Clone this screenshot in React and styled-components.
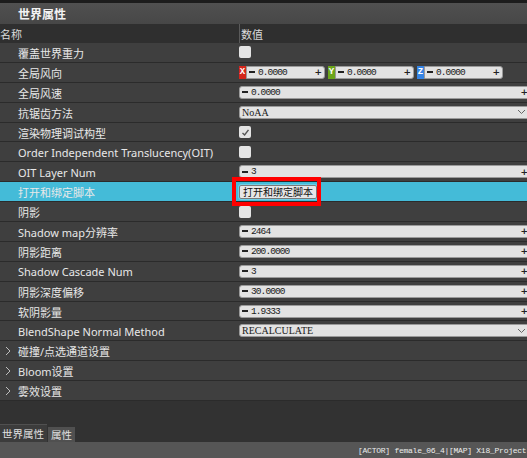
import React from 'react';
import styled, { createGlobalStyle } from 'styled-components';

const GlobalStyle = createGlobalStyle`
  html, body {
    margin: 0;
    padding: 0;
    background: #323232;
    overflow: hidden;
  }
`;

const CJK = `"Noto Sans", "Noto Sans CJK SC", sans-serif`;
const MONO = `"Liberation Mono", "Noto Sans CJK SC", monospace`;

const Panel = styled.div`
  width: 527px;
  height: 458px;
  display: flex;
  flex-direction: column;
  background: #323232;
  font-family: ${CJK};
  color: #e6e6e6;
  overflow: hidden;
`;

const TopStrip = styled.div`
  height: 3px;
  background: #1c1c1c;
`;

const TitleBar = styled.div`
  height: 21px;
  display: flex;
  align-items: center;
  padding-left: 18px;
  background: linear-gradient(#505050, #474747);
  font-size: 12px;
  font-weight: bold;
  color: #f2f2f2;
`;

const Grid = styled.div`
  display: grid;
  grid-template-columns: 239px 1fr;
`;

const HeaderRow = styled(Grid)`
  height: 19px;
  background: #2f2f2f;
  font-size: 11px;
  align-items: center;
  color: #dcdcdc;
`;

const HeaderCell = styled.div`
  height: 100%;
  display: flex;
  align-items: center;
  ${(p) => p.$divider && 'border-left: 1px solid #5a5a5a; padding-left: 1px;'}
`;

const Row = styled(Grid)`
  height: 18.9px;
  border-bottom: 1px solid #2b2b2b;
  background: ${(p) => (p.$active ? '#44bbd8' : '#3f3f3f')};
  align-items: center;
  font-size: 11px;
`;

const Label = styled.div`
  padding-left: 18px;
  padding-top: 1px;
  white-space: nowrap;
  color: #e8e8e8;
`;

const ValueCell = styled.div`
  position: relative;
  height: 100%;
  display: flex;
  align-items: center;
  gap: 2px;
  min-width: 0;
`;

const Check = styled.div`
  width: 12px;
  height: 12px;
  border-radius: 2px;
  background: #e4e4e4;
  display: flex;
  align-items: center;
  justify-content: center;
`;

const Spin = styled.div`
  flex: ${(p) => (p.$w ? `0 0 ${p.$w}px` : '1')};
  height: 11px;
  background: #e2e2e2;
  border: 1px solid #9a9a9a;
  border-radius: ${(p) => (p.$flat ? '0 3px 3px 0' : '3px')};
  display: flex;
  align-items: center;
  font-family: ${MONO};
  font-size: 9.5px;
  letter-spacing: -0.9px;
  color: #1a1a1a;
  padding: 0 2px;
  box-sizing: content-box;
  margin-right: ${(p) => (p.$w ? '0' : '-4px')};
`;

const Minus = styled.span`
  width: 6px;
  height: 2px;
  background: #222;
  margin-right: 3px;
`;

const SpinText = styled.span`
  flex: 1;
  white-space: nowrap;
`;

const Plus = styled.span`
  font-family: "DejaVu Sans", sans-serif;
  font-weight: bold;
  font-size: 9px;
  letter-spacing: 0;
  color: #222;
`;

const Axis = styled.div`
  width: 7px;
  height: 13px;
  background: ${(p) => p.$c};
  color: #fff;
  font-family: ${MONO};
  font-size: 9px;
  font-weight: bold;
  display: flex;
  align-items: center;
  justify-content: center;
`;

const Vec = styled.div`
  display: flex;
  align-items: center;
  margin-right: 1px;
`;

const Combo = styled.div`
  flex: 1;
  height: 11px;
  margin-right: -4px;
  background: #e2e2e2;
  border: 1px solid #9a9a9a;
  border-radius: 3px;
  display: flex;
  align-items: center;
  padding: 0 10px 0 2px;
  font-family: "Liberation Serif", serif;
  font-size: 10px;
  color: #1a1a1a;
`;

const Button = styled.div`
  height: 12px;
  padding: 0 3px;
  background: #e6e6e6;
  border: 1px solid #7a7a7a;
  outline: 1px solid #6fd0e8;
  border-radius: 2px;
  font-size: 10px;
  color: #111;
  display: flex;
  align-items: center;
  font-family: "Noto Sans CJK SC", sans-serif;
`;

const Marker = styled.div`
  position: absolute;
  left: -7px;
  top: -5px;
  width: 81px;
  height: 21px;
  border: 4px solid #ff0000;
  pointer-events: none;
`;

const GroupRow = styled.div`
  height: 18.9px;
  border-bottom: 1px solid #2b2b2b;
  background: #3f3f3f;
  display: flex;
  align-items: center;
  font-size: 11px;
  color: #e6e6e6;
`;

const Chevron = styled.span`
  width: 18px;
  display: flex;
  justify-content: center;
  padding-right: 2px;
  box-sizing: border-box;
`;

const Filler = styled.div`
  flex: 1;
  background: #323232;
`;

const TabBar = styled.div`
  height: 18px;
  display: flex;
  align-items: flex-end;
  background: #323232;
`;

const Tab = styled.div`
  height: ${(p) => (p.$on ? 18 : 15)}px;
  padding: 0 3px 0 ${(p) => (p.$on ? 2 : 3)}px;
  background: ${(p) => (p.$on ? '#3c3c3c' : '#505050')};
  border-top: ${(p) => (p.$on ? '1px solid #505050' : 'none')};
  box-sizing: border-box;
  font-size: 10.5px;
  color: #e0e0e0;
  display: flex;
  align-items: center;
  margin-right: 1px;
  font-family: "Noto Sans CJK SC", sans-serif;
`;

const StatusBar = styled.div`
  height: 16px;
  background: #565656;
  display: flex;
  align-items: center;
  padding-left: 358px;
  font-family: ${MONO};
  font-size: 8px;
  letter-spacing: -0.25px;
  color: #ececec;
  white-space: nowrap;
  overflow: hidden;
`;

const Tick = () => (
  <svg width="9" height="9" viewBox="0 0 9 9">
    <path d="M1.5 5 L3.6 7 L7.5 1.8" fill="none" stroke="#555" strokeWidth="1.4" />
  </svg>
);

const Down = () => (
  <svg width="9" height="6" viewBox="0 0 9 6" style={{ marginLeft: 'auto', marginRight: '-6px' }}>
    <path d="M1 1 L4.5 4.5 L8 1" fill="none" stroke="#666" strokeWidth="1" />
  </svg>
);

const Right = () => (
  <svg width="6" height="10" viewBox="0 0 6 10">
    <path d="M1 1 L5 5 L1 9" fill="none" stroke="#bdbdbd" strokeWidth="1" />
  </svg>
);

const SpinBox = ({ value, w, flat }) => (
  <Spin $w={w} $flat={flat}>
    <Minus />
    <SpinText>{value}</SpinText>
    <Plus>+</Plus>
  </Spin>
);

const rows = [
  { label: '覆盖世界重力', kind: 'check' },
  { label: '全局风向', kind: 'vec' },
  { label: '全局风速', kind: 'spin', value: '0.0000' },
  { label: '抗锯齿方法', kind: 'combo', value: 'NoAA' },
  { label: '渲染物理调试构型', kind: 'check', on: true },
  { label: 'Order Independent Translucency(OIT)', kind: 'check' },
  { label: 'OIT Layer Num', kind: 'spin', value: '3' },
  { label: '打开和绑定脚本', kind: 'button', active: true },
  { label: '阴影', kind: 'check' },
  { label: 'Shadow map分辨率', kind: 'spin', value: '2464' },
  { label: '阴影距离', kind: 'spin', value: '200.0000' },
  { label: 'Shadow Cascade Num', kind: 'spin', value: '3' },
  { label: '阴影深度偏移', kind: 'spin', value: '30.0000' },
  { label: '软阴影量', kind: 'spin', value: '1.9333' },
  { label: 'BlendShape Normal Method', kind: 'combo', value: 'RECALCULATE' },
];

const groups = ['碰撞/点选通道设置', 'Bloom设置', '雾效设置'];

const axes = [
  { name: 'X', color: '#d3261b' },
  { name: 'Y', color: '#6ba51b' },
  { name: 'Z', color: '#3584e4' },
];

const renderValue = (r) => {
  switch (r.kind) {
    case 'check':
      return <Check>{r.on && <Tick />}</Check>;
    case 'vec':
      return axes.map((a) => (
        <Vec key={a.name}>
          <Axis $c={a.color}>{a.name}</Axis>
          <SpinBox value="0.0000" w={73} flat />
        </Vec>
      ));
    case 'spin':
      return <SpinBox value={r.value} />;
    case 'combo':
      return (
        <Combo>
          {r.value}
          <Down />
        </Combo>
      );
    case 'button':
      return (
        <>
          <Button>打开和绑定脚本</Button>
          <Marker />
        </>
      );
    default:
      return null;
  }
};

export default function App() {
  return (
    <Panel>
      <GlobalStyle />
      <TopStrip />
      <TitleBar>世界属性</TitleBar>
      <HeaderRow>
        <HeaderCell>名称</HeaderCell>
        <HeaderCell $divider>数值</HeaderCell>
      </HeaderRow>
      {rows.map((r) => (
        <Row key={r.label} $active={r.active}>
          <Label>{r.label}</Label>
          <ValueCell>{renderValue(r)}</ValueCell>
        </Row>
      ))}
      {groups.map((g) => (
        <GroupRow key={g}>
          <Chevron>
            <Right />
          </Chevron>
          {g}
        </GroupRow>
      ))}
      <Filler />
      <TabBar>
        <Tab $on>世界属性</Tab>
        <Tab>属性</Tab>
      </TabBar>
      <StatusBar>[ACTOR] female_06_4|[MAP] X18_Project</StatusBar>
    </Panel>
  );
}
